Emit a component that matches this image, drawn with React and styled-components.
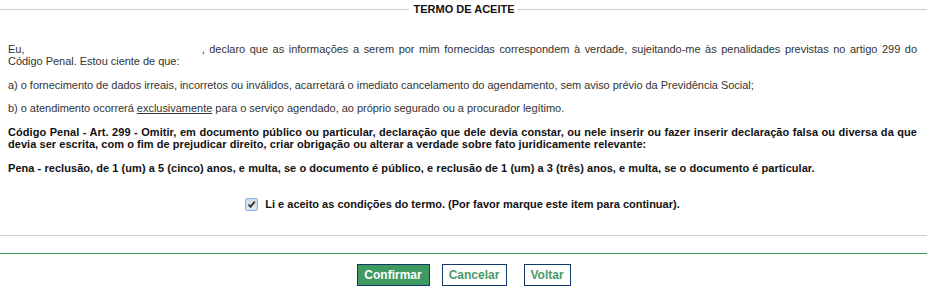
import React from "react";
import styled, { createGlobalStyle } from "styled-components";

const Global = createGlobalStyle`
  html, body { margin: 0; padding: 0; background: #fff; }
  body { font-family: "Liberation Sans", Arial, sans-serif; }
`;

const Page = styled.div`
  width: 927px;
  font-family: "Liberation Sans", Arial, sans-serif;
  font-size: 11px;
  color: #333;
`;

const Terms = styled.section`
  border-bottom: 1px solid #cccccc;
`;

const TitleRow = styled.div`
  display: flex;
  align-items: center;
  height: 19px;
  &::before, &::after {
    content: "";
    flex: 1;
    height: 1px;
    background: #cccccc;
  }
`;

const Title = styled.h2`
  margin: 0;
  padding: 0 3px 0 4px;
  font-size: 11px;
  font-weight: bold;
  color: #111;
  line-height: 13px;
`;

const Body = styled.div`
  padding: 24px 10px 24px 8px;
`;

const Para = styled.p`
  margin: 0 0 ${(p) => p.$mb ?? 11}px;
  line-height: 12px;
  text-align: ${(p) => (p.$justify ? "justify" : "left")};
  font-weight: ${(p) => (p.$bold ? "bold" : "normal")};
  letter-spacing: ${(p) => (p.$bold ? "0.05px" : "-0.03px")};
  color: ${(p) => (p.$bold ? "#111" : "#333")};
`;

const Blank = styled.span`
  display: inline-block;
  width: 168px;
`;

const Under = styled.u``;

const AcceptRow = styled.label`
  display: flex;
  align-items: center;
  justify-content: center;
  gap: 7px;
  margin-top: 23px;
  font-weight: bold;
  color: #111;
  line-height: 14px;
`;

const Box = styled.span`
  width: 11px;
  height: 11px;
  border: 1px solid #86b6ea;
  border-radius: 2px;
  background: linear-gradient(#d8d8d8, #ececec);
  display: inline-flex;
  align-items: center;
  justify-content: center;
  box-shadow: inset 0 0 0 1px #c9dff6;
`;

const Divider = styled.hr`
  margin: 17px 0 0;
  border: 0;
  height: 1px;
  background: #3c9a5c;
`;

const Actions = styled.div`
  display: flex;
  justify-content: center;
  padding-top: 10px;
`;

const Button = styled.button`
  height: 22px;
  width: ${(p) => p.$w}px;
  margin-left: ${(p) => p.$ml || 0}px;
  padding: 0;
  font-family: "Liberation Sans", Arial, sans-serif;
  font-size: 12px;
  font-weight: bold;
  border: 1px solid #0f3867;
  background: ${(p) => (p.$primary ? "#3e9a60" : "#fff")};
  color: ${(p) => (p.$primary ? "#fff" : "#4a9a6a")};
  cursor: pointer;
`;

export default function App() {
  return (
    <Page>
      <Global />
      <Terms>
        <TitleRow>
          <Title>TERMO DE ACEITE</Title>
        </TitleRow>
        <Body>
          <Para $justify $mb={12}>
            Eu, <Blank /> , declaro que as informações a serem por mim fornecidas correspondem à verdade, sujeitando-me às penalidades previstas no artigo 299 do Código Penal. Estou ciente de que:
          </Para>
          <Para $mb={11}>
            a) o fornecimento de dados irreais, incorretos ou inválidos, acarretará o imediato cancelamento do agendamento, sem aviso prévio da Previdência Social;
          </Para>
          <Para $mb={12}>
            b) o atendimento ocorrerá <Under>exclusivamente</Under> para o serviço agendado, ao próprio segurado ou a procurador legítimo.
          </Para>
          <Para $bold $justify $mb={12}>
            Código Penal - Art. 299 - Omitir, em documento público ou particular, declaração que dele devia constar, ou nele inserir ou fazer inserir declaração falsa ou diversa da que devia ser escrita, com o fim de prejudicar direito, criar obrigação ou alterar a verdade sobre fato juridicamente relevante:
          </Para>
          <Para $bold $mb={0}>
            Pena - reclusão, de 1 (um) a 5 (cinco) anos, e multa, se o documento é público, e reclusão de 1 (um) a 3 (três) anos, e multa, se o documento é particular.
          </Para>
          <AcceptRow>
            <Box>
              <svg width="9" height="9" viewBox="0 0 9 9">
                <path d="M1.5 4.5 L3.5 6.8 L7.8 1.6" fill="none" stroke="#333" strokeWidth="1.8" />
              </svg>
            </Box>
            Li e aceito as condições do termo. (Por favor marque este item para continuar).
          </AcceptRow>
        </Body>
      </Terms>
      <Divider />
      <Actions>
        <Button $primary $w={73}>Confirmar</Button>
        <Button $w={65} $ml={12}>Cancelar</Button>
        <Button $w={47} $ml={17}>Voltar</Button>
      </Actions>
    </Page>
  );
}
